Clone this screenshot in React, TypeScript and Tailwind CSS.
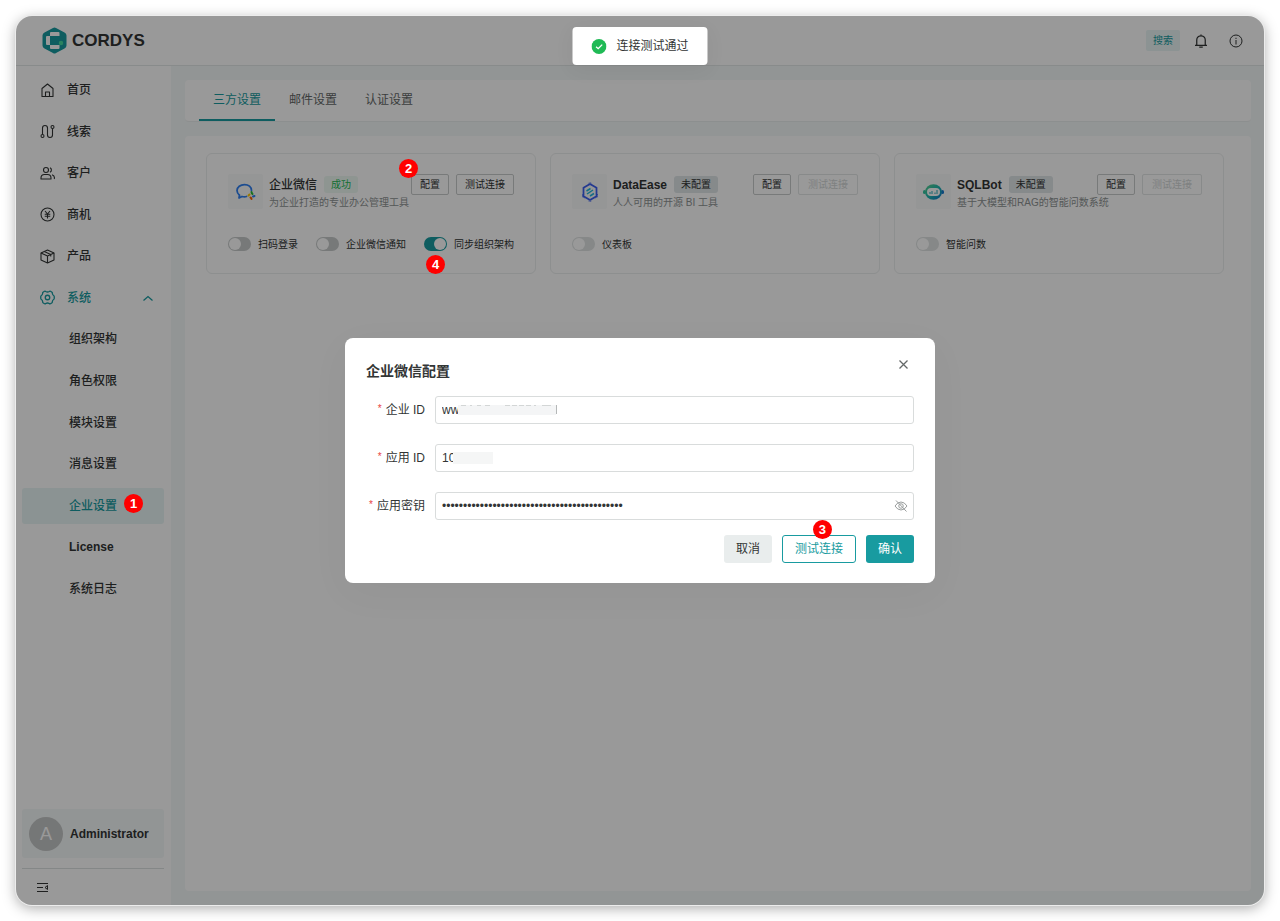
import { useState } from 'react';
import type { ReactNode } from 'react';
import clsx from 'clsx';

type MenuItem = {
    label: string;
    icon?: ReactNode;
    active?: boolean;
    open?: boolean;
    step?: number;
};

type Switch = {
    label: string;
    checked?: boolean;
    step?: number;
};

type Integration = {
    name: string;
    desc: string;
    logo: ReactNode;
    connected: boolean;
    step?: number;
    switches: Switch[];
};

function NavIcon({ children }: { children: ReactNode }) {
    return (
        <svg viewBox="0 0 30 30" className="size-[15px] shrink-0" fill="none" stroke="currentColor" strokeWidth="2.2" strokeLinejoin="round">
            {children}
        </svg>
    );
}

const menu: MenuItem[] = [
    {
        label: '首页',
        icon: (
            <NavIcon>
                <path d="M4 11 15 2l11 9v16H4z" />
                <path d="M11 27v-9h8v9" />
            </NavIcon>
        ),
    },
    {
        label: '线索',
        icon: (
            <NavIcon>
                <circle cx="5" cy="24" r="3" />
                <circle cx="25" cy="6" r="3" />
                <path d="M5 21V8a5 5 0 0 1 10 0v14a5 5 0 0 0 10 0V9" />
            </NavIcon>
        ),
    },
    {
        label: '客户',
        icon: (
            <NavIcon>
                <circle cx="12" cy="8" r="5" />
                <path d="M2 26v-2a7 7 0 0 1 7-7h6a7 7 0 0 1 7 7v2z" />
                <path d="M20 3.5a5 5 0 0 1 0 9M24 17.5a7 7 0 0 1 4.5 8.5" />
            </NavIcon>
        ),
    },
    {
        label: '商机',
        icon: (
            <NavIcon>
                <circle cx="15" cy="15" r="13" />
                <path d="m10 8 5 6 5-6M9.5 14.5h11M9.5 18.5h11M15 14v9" />
            </NavIcon>
        ),
    },
    {
        label: '产品',
        icon: (
            <NavIcon>
                <path d="M15 2 28 8v14l-13 6-13-6V8z" />
                <path d="m2 8 13 6 13-6M15 14v14M8.5 5l13 6v4" />
            </NavIcon>
        ),
    },
    {
        label: '系统',
        open: true,
        icon: (
            <NavIcon>
                <path
                    d="M9 2.5q1.500-.5 2.500.5 3.500 2 7 0 1-1 2.500-.5l3 2q1 1 .7 2.500.3 3 3 4.500.8.700.8 2v3q0 1.300-.8 2-2.700 1.500-3 4.500.3 1.500-.7 2.500l-3 2q-1.500.5-2.500-.5-3.500-2-7 0-1 1-2.500.5l-3-2q-1-1-.7-2.500-.3-3-3-4.500-.8-.7-.8-2v-3q0-1.300.8-2 2.700-1.500 3-4.500Q5 5.500 6 4.500z"
                    strokeWidth="2.600"
                />
                <circle cx="15" cy="15" r="4.500" strokeWidth="2.600" />
            </NavIcon>
        ),
    },
    { label: '组织架构' },
    { label: '角色权限' },
    { label: '模块设置' },
    { label: '消息设置' },
    { label: '企业设置', active: true, step: 1 },
    { label: 'License' },
    { label: '系统日志' },
];

const integrations: Integration[] = [
    {
        name: '企业微信',
        desc: '为企业打造的专业办公管理工具',
        connected: true,
        step: 2,
        switches: [
            { label: '扫码登录' },
            { label: '企业微信通知' },
            { label: '同步组织架构', checked: true, step: 4 },
        ],
        logo: (
            <svg viewBox="0 0 40 34" className="w-5" fill="none" strokeLinecap="round">
                <path d="M31 15C31 8 25 3 17 3S2 8 2 15c0 4 2 7 5 9.5L6 30l6-3c4 1 6 1 9 0" stroke="#2f7ff0" strokeWidth="3.5" strokeLinejoin="round" />
                <path d="M31 18c0 2 1 3 2 4" stroke="#2cbc3a" strokeWidth="4" />
                <path d="m37 26-3 1" stroke="#2f7ff0" strokeWidth="4" />
                <path d="M31 32c0-2-1-2-2-3" stroke="#fb6500" strokeWidth="4" />
                <path d="m25 25 2-2" stroke="#ffcc00" strokeWidth="4" />
            </svg>
        ),
    },
    {
        name: 'DataEase',
        desc: '人人可用的开源 BI 工具',
        connected: false,
        switches: [{ label: '仪表板' }],
        logo: (
            <svg viewBox="0 0 36 40" className="w-[18px]" fill="none">
                <path d="M18 4 31 11.5v17L18 36 5 28.5v-17z" stroke="#3b5ff0" strokeWidth="3.5" />
                <path d="M15 2.5 18 1l3 1.5M33 24v6l-4 2M7 32l-4-2v-6M15 38l3 1.5 3-1.5" stroke="#3b5ff0" strokeWidth="1.5" strokeDasharray="2 1" />
                <path d="m11 18 8-5M12 24l12-8M18 28l8-5" stroke="#22b8e0" strokeWidth="3" />
            </svg>
        ),
    },
    {
        name: 'SQLBot',
        desc: '基于大模型和RAG的智能问数系统',
        connected: false,
        switches: [{ label: '智能问数' }],
        logo: (
            <svg viewBox="0 0 42 32" className="w-[21px]" fill="none">
                <defs>
                    <linearGradient id="bot" x1="0" y1="0" x2="1" y2="1">
                        <stop offset="0" stopColor="#5fd38c" />
                        <stop offset="0.5" stopColor="#20b8b0" />
                        <stop offset="1" stopColor="#1173d0" />
                    </linearGradient>
                </defs>
                <rect x="0" y="12" width="6" height="8" rx="3" fill="#35c5a0" />
                <rect x="36" y="12" width="6" height="8" rx="3" fill="#1778cf" />
                <ellipse cx="21" cy="16" rx="17" ry="15.5" fill="url(#bot)" />
                <rect x="8" y="8" width="26" height="16" rx="8" fill="#fff" />
                <path d="M14 20v-4M18 20v-6M24 20v-3M28 20v-8" stroke="#20a8b8" strokeWidth="2" />
            </svg>
        ),
    },
];

// Numbered guide marker, kept above the modal mask
function Step({ n, className }: { n: number; className: string }) {
    return (
        <span className={clsx('absolute z-30 flex size-[19px] items-center justify-center rounded-full bg-[#ff0000] text-[13px] leading-none font-bold text-white', className)}>
            {n}
        </span>
    );
}

function Header() {
    return (
        <header className="flex h-[50px] items-center justify-between border-b border-[#e3e8e8] bg-white pr-[21px] pl-[26px]">
            <a href="#" className="flex items-center gap-[5px]">
                <svg viewBox="0 0 50 54" className="w-[25px]">
                    <path d="M22 2q3-2 6 0l17 9q4 2 4 6v20q0 4-4 6l-17 9q-3 2-6 0L5 43q-4-2-4-6V17q0-4 4-6z" fill="#189ba0" />
                    <path d="M18 10h15q2 0 2 2v6H16v-6q0-2 2-2zM16 36h19v6q0 2-2 2H18q-2 0-2-2z" fill="#fff" />
                    <path d="M10 18h6v18h-6q-2 0-2-2V20q0-2 2-2z" fill="#fff" />
                    <circle cx="38" cy="32" r="4.5" fill="#46dba0" />
                </svg>
                <span className="text-[17px] font-bold">CORDYS</span>
            </a>
            <div className="flex items-center">
                <button className="h-[21px] rounded-xs bg-[#e9f6f6] px-[7px] text-[10px] text-[#189ba0]">搜索</button>
                <button aria-label="通知" className="ml-[14px]">
                    <svg viewBox="0 0 28 28" className="size-[14px]" fill="none" stroke="currentColor" strokeWidth="2.5">
                        <path d="M2 22.5h24M5.5 22V12a8.5 8.5 0 0 1 17 0v10M14 1v3M10.5 26h7" />
                    </svg>
                </button>
                <button aria-label="关于" className="ml-[21px]">
                    <svg viewBox="0 0 28 28" className="size-[14px]" fill="none" stroke="currentColor" strokeWidth="2">
                        <circle cx="14" cy="14" r="12" />
                        <path d="M14 7.5v2.5M14 12v9" />
                    </svg>
                </button>
            </div>
        </header>
    );
}

function Sidebar() {
    return (
        <aside className="flex w-[155px] shrink-0 flex-col bg-white pr-[7px] pl-[6px]">
            <nav className="mt-[6px] flex h-[535px] flex-col justify-between">
                {menu.map((item) => (
                    <a
                        key={item.label}
                        href="#"
                        className={clsx(
                            'relative flex h-9 items-center rounded-[3px] text-xs',
                            item.label === 'License' ? 'font-bold' : 'font-medium',
                            item.icon ? 'gap-3 pr-[11px] pl-[18px]' : 'pl-[47px]',
                            (item.active || item.open) && 'text-[#189ba0]',
                            item.active && 'bg-[#e8f5f5]',
                        )}
                    >
                        {item.icon}
                        <span className="flex-1">{item.label}</span>
                        {item.open && (
                            <svg viewBox="0 0 20 12" className="w-[10px]" fill="none" stroke="currentColor" strokeWidth="2.5">
                                <path d="m1 11 9-8 9 8" />
                            </svg>
                        )}
                        {item.step && <Step n={item.step} className="top-[6px] left-[102px]" />}
                    </a>
                ))}
            </nav>
            <div className="mt-auto flex h-[49px] items-center gap-[7px] rounded-[3px] bg-[#f4f8f8] pl-[7px]">
                <span className="flex size-[34px] items-center justify-center rounded-full bg-[#c4c6c6] text-lg text-white">A</span>
                <span className="text-xs font-bold">Administrator</span>
            </div>
            <div className="mt-[10px] flex h-[37px] items-center border-t border-[#dde1e1] pl-[15px]">
                <button aria-label="收起">
                    <svg viewBox="0 0 22 18" className="w-[11px]" fill="none" stroke="currentColor" strokeWidth="2">
                        <path d="M0 1h22M0 9h12M0 17h22M21 5v8l-5-4z" />
                    </svg>
                </button>
            </div>
        </aside>
    );
}

function IntegrationCard({ item }: { item: Integration }) {
    return (
        <section className="rounded-md border border-[#ebeeee] px-[21px] pt-5 pb-[21px]">
            <div className="flex">
                <span className="flex size-[35px] shrink-0 items-center justify-center rounded-xs bg-[#f8fafa]">{item.logo}</span>
                <div className="ml-[6px] min-w-0 flex-1">
                    <div className="flex h-[21px] items-center">
                        <h3 className={clsx('text-xs', item.connected ? 'font-medium' : 'font-bold')}>{item.name}</h3>
                        <span
                            className={clsx(
                                'ml-[7px] flex h-[17px] items-center rounded-[3px] px-[7px] text-[10px]',
                                item.connected ? 'bg-[#edf9f2] text-[#1fba55]' : 'bg-[#e0e6e8]',
                            )}
                        >
                            {item.connected ? '成功' : '未配置'}
                        </span>
                        <div className="relative ml-auto flex gap-[7px]">
                            <button className="h-[21px] rounded-xs border border-[#c8cccc] px-2 text-[10px]">配置</button>
                            <button
                                disabled={!item.connected}
                                className="h-[21px] rounded-xs border border-[#c8cccc] px-2 text-[10px] disabled:border-[#e3e6e6] disabled:px-[9px] disabled:text-[#d3d7d7]"
                            >
                                测试连接
                            </button>
                            {item.step && <Step n={item.step} className="-top-[15px] -left-[12px]" />}
                        </div>
                    </div>
                    <p className="text-[10px] leading-4 text-[#8e9393]">{item.desc}</p>
                </div>
            </div>
            <div className="mt-[25px] flex justify-between">
                {item.switches.map((s) => (
                    <label key={s.label} className="relative flex h-4 items-center gap-[7px] text-[10px]">
                        <input
                            type="checkbox"
                            defaultChecked={s.checked}
                            disabled={!item.connected}
                            className="h-[14px] w-[23px] appearance-none rounded-full bg-[#c6caca] p-px before:block before:size-3 before:rounded-full before:bg-white checked:bg-[#189ba0] checked:before:ml-[9px] disabled:bg-[#dfe3e3]"
                        />
                        {s.label}
                        {s.step && <Step n={s.step} className="top-[19px] left-[2px]" />}
                    </label>
                ))}
            </div>
        </section>
    );
}

function Field({ id, label, children }: { id: string; label: string; children: ReactNode }) {
    return (
        <div className="flex items-center gap-[10px]">
            <label htmlFor={id} className="w-[59px] shrink-0 text-right text-xs whitespace-nowrap">
                <span className="mr-1 align-top text-[10px] text-[#e8433f]">*</span>
                {label}
            </label>
            <div className="relative flex-1">{children}</div>
        </div>
    );
}

function ConfigDialog() {
    const [visible, setVisible] = useState(false);
    const input = 'block h-7 w-full rounded-[3px] border border-[#d9dcdc] bg-white px-[6px] text-xs outline-none';

    return (
        <form role="dialog" aria-label="企业微信配置" className="relative w-[590px] max-w-full rounded-lg bg-white px-[21px] pt-[23px] pb-5 shadow-[0_10px_40px_rgba(0,0,0,0.04)]">
            <h2 className="text-sm leading-5 font-bold">企业微信配置</h2>
            <button type="button" aria-label="关闭" className="absolute top-[22px] right-[27px] text-[#646868]">
                <svg viewBox="0 0 18 18" className="size-[9px]" fill="none" stroke="currentColor" strokeWidth="2.5">
                    <path d="m1 1 16 16M17 1 1 17" />
                </svg>
            </button>
            <div className="mt-[15px] flex flex-col gap-5">
                <Field id="corp" label="企业 ID">
                    <input id="corp" className={input} defaultValue="ww" />
                    <svg viewBox="0 0 100 12" className="absolute top-2 left-[23px] h-3 w-[100px]">
                        <rect y="1" width="98" height="10" fill="#f4f5f6" />
                        <path d="M3 1.5h5M12 1.5h2M19 1.5h4M27 1.5h5M47 1.5h5M54 1.5h5M61 1.5h5M68 1.5h5M76 1.5h2M84 1.5h9" stroke="#d3d6d6" />
                        <path d="M98.5 1v9" stroke="#b5b8b8" />
                    </svg>
                </Field>
                <Field id="app" label="应用 ID">
                    <input id="app" className={input} defaultValue="10" />
                    <span className="absolute top-2 left-[18px] h-3 w-10 bg-[#f5f6f6]" />
                </Field>
                <Field id="secret" label="应用密钥">
                    <input id="secret" type={visible ? 'text' : 'password'} className={input} defaultValue={'x'.repeat(43)} />
                    <button type="button" aria-label="显示密钥" onClick={() => setVisible(!visible)} className="absolute top-[7px] right-[6px] text-[#9a9e9e]">
                        <svg viewBox="0 0 28 28" className="size-[14px]" fill="none" stroke="currentColor" strokeWidth="2">
                            <path d="M2 14q5-8 12-8t12 8q-5 8-12 8T2 14z" />
                            <circle cx="14" cy="14" r="4.5" />
                            <path d="m4 3 21 22" />
                        </svg>
                    </button>
                </Field>
            </div>
            <div className="mt-[15px] flex justify-end gap-[10px] text-xs">
                <button type="button" className="h-7 rounded-[3px] bg-[#e9eded] px-3">取消</button>
                <button type="button" className="relative h-7 rounded-[3px] border border-[#189ba0] px-3 text-[#189ba0]">
                    测试连接
                    <Step n={3} className="-top-[16px] left-[30px]" />
                </button>
                <button type="button" className="h-7 rounded-[3px] bg-[#189ba0] px-3 text-white">确认</button>
            </div>
        </form>
    );
}

export default function App() {
    return (
        <div className="flex min-h-screen bg-white p-4 font-['Liberation_Sans','Noto_Sans_CJK_SC',sans-serif] text-[#323535]">
            <div className="relative flex min-w-0 flex-1 flex-col overflow-hidden rounded-2xl shadow-[0_0_0_1px_#ececec,0_3px_14px_rgba(0,0,0,0.35)]">
                <Header />
                <div className="flex flex-1">
                    <Sidebar />
                    <main className="flex min-w-0 flex-1 flex-col gap-[14px] bg-[#f4f9f8] p-[14px] pr-[13px]">
                        <div role="tablist" className="flex h-[42px] rounded-sm border-b border-[#eaeeee] bg-white pl-[14px] text-xs">
                            {['三方设置', '邮件设置', '认证设置'].map((tab, i) => (
                                <button
                                    key={tab}
                                    role="tab"
                                    aria-selected={i === 0}
                                    className={clsx('border-b-2 px-[14px]', i === 0 ? 'border-[#189ba0] text-[#189ba0]' : 'border-transparent text-[#646868]')}
                                >
                                    {tab}
                                </button>
                            ))}
                        </div>
                        <div className="flex-1 rounded-sm bg-white pt-[17px] pr-[27px] pl-[21px]">
                            <div className="grid grid-cols-3 gap-[14px]">
                                {integrations.map((item) => (
                                    <IntegrationCard key={item.name} item={item} />
                                ))}
                            </div>
                        </div>
                    </main>
                </div>
                <div className="absolute inset-0 z-10 bg-black/40" />
                <div className="pointer-events-none absolute inset-0 z-20 flex items-center justify-center">
                    <div className="pointer-events-auto">
                        <ConfigDialog />
                    </div>
                </div>
                <div role="status" className="absolute top-[11px] left-1/2 z-20 flex h-[38px] -translate-x-1/2 items-center gap-[10px] rounded-sm bg-white px-[19px] text-xs whitespace-nowrap shadow-[0_4px_20px_rgba(0,0,0,0.06)]">
                    <svg viewBox="0 0 28 28" className="size-[15px]">
                        <circle cx="14" cy="14" r="14" fill="#1fba55" />
                        <path d="m8.5 14.5 4 3.5 7.5-7.5" fill="none" stroke="#fff" strokeWidth="2.5" />
                    </svg>
                    连接测试通过
                </div>
            </div>
        </div>
    );
}
